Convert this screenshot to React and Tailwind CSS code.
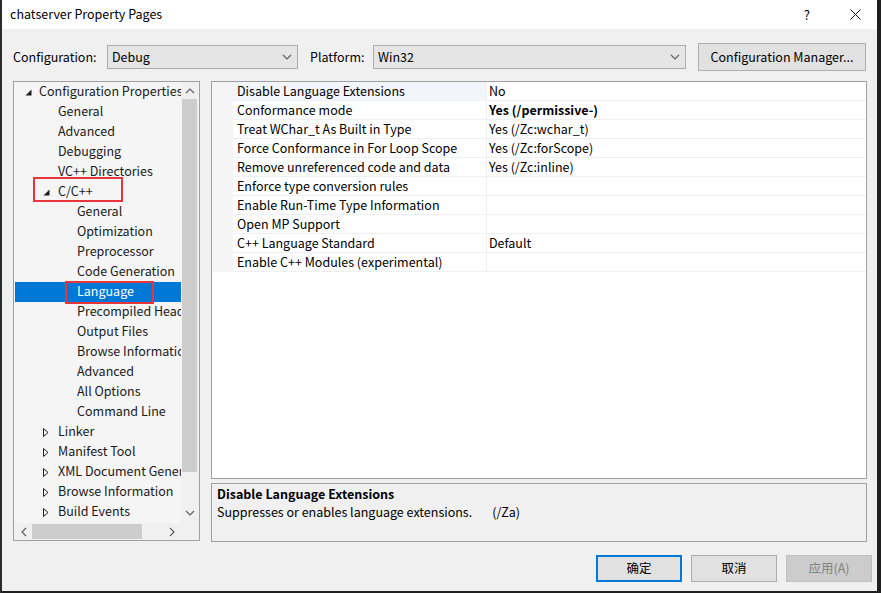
import React from "react";

const font = { fontFamily: '"Noto Sans CJK SC", "Noto Sans", sans-serif' };

const treeRows = [
  { label: "Configuration Properties", level: 0, arrow: "open" },
  { label: "General", level: 1 },
  { label: "Advanced", level: 1 },
  { label: "Debugging", level: 1 },
  { label: "VC++ Directories", level: 1 },
  { label: "C/C++", level: 1, arrow: "open", boxed: true },
  { label: "General", level: 2 },
  { label: "Optimization", level: 2 },
  { label: "Preprocessor", level: 2 },
  { label: "Code Generation", level: 2 },
  { label: "Language", level: 2, selected: true, boxed: true },
  { label: "Precompiled Headers", level: 2 },
  { label: "Output Files", level: 2 },
  { label: "Browse Information", level: 2 },
  { label: "Advanced", level: 2 },
  { label: "All Options", level: 2 },
  { label: "Command Line", level: 2 },
  { label: "Linker", level: 1, arrow: "closed" },
  { label: "Manifest Tool", level: 1, arrow: "closed" },
  { label: "XML Document Generator", level: 1, arrow: "closed" },
  { label: "Browse Information", level: 1, arrow: "closed" },
  { label: "Build Events", level: 1, arrow: "closed" },
];

const props = [
  { name: "Disable Language Extensions", value: "No", current: true },
  { name: "Conformance mode", value: "Yes (/permissive-)", bold: true },
  { name: "Treat WChar_t As Built in Type", value: "Yes (/Zc:wchar_t)" },
  { name: "Force Conformance in For Loop Scope", value: "Yes (/Zc:forScope)" },
  { name: "Remove unreferenced code and data", value: "Yes (/Zc:inline)" },
  { name: "Enforce type conversion rules", value: "" },
  { name: "Enable Run-Time Type Information", value: "" },
  { name: "Open MP Support", value: "" },
  { name: "C++ Language Standard", value: "Default" },
  { name: "Enable C++ Modules (experimental)", value: "" },
];

const Chevron = ({ dir = "down", className = "" }) => {
  const d = {
    down: "M1 3 L5 7 L9 3",
    up: "M1 7 L5 3 L9 7",
    left: "M7 1 L3 5 L7 9",
    right: "M3 1 L7 5 L3 9",
  }[dir];
  return (
    <svg width="10" height="10" viewBox="0 0 10 10" className={className}>
      <path d={d} fill="none" stroke="currentColor" strokeWidth="1.2" />
    </svg>
  );
};

const Arrow = ({ type }) =>
  type === "open" ? (
    <svg width="7" height="7" viewBox="0 0 7 7">
      <polygon points="6.5,0.5 6.5,6.5 0.5,6.5" fill="#1e1e1e" />
    </svg>
  ) : (
    <svg width="6" height="9" viewBox="0 0 6 9">
      <polygon points="0.5,0.5 5,4.5 0.5,8.5" fill="none" stroke="#1e1e1e" strokeWidth="1" />
    </svg>
  );

const Select = ({ value, width }) => (
  <div
    className="h-[24px] bg-[#e5e5e5] border border-[#acacac] flex items-center justify-between pl-[4px] pr-[5px] text-[12.5px] text-black"
    style={{ width }}
  >
    <span>{value}</span>
    <Chevron className="text-[#606060]" />
  </div>
);

const TreeRow = ({ row }) => {
  const indent = [25, 43, 62][row.level];
  const textX = [39, 58, 77][row.level];
  return (
    <div
      className={`relative h-[20px] flex items-center whitespace-nowrap ${
        row.selected ? "bg-[#0078d7] text-white ml-[1px]" : "text-[#1a1a1a]"
      }`}
    >
      {row.arrow && (
        <span className="absolute flex items-center" style={{ left: indent - 14 }}>
          <Arrow type={row.arrow} />
        </span>
      )}
      <span className="-mt-[1px]" style={{ marginLeft: textX - 14 - (row.selected ? 1 : 0) }}>
        {row.label}
      </span>
      {row.boxed && (
        <span
          className="absolute border-2 border-[#e8343a] pointer-events-none"
          style={
            row.selected
              ? { left: 50, top: -1, width: 89, height: 23 }
              : { left: 19, top: -5, width: 90, height: 25 }
          }
        />
      )}
    </div>
  );
};

export default function App() {
  return (
    <div className="w-[881px] h-[593px] bg-[#1f1f1f] flex overflow-hidden" style={font}>
      <div className="w-[2px] bg-[#2b2b2b]" />
      <div className="w-[875px] h-[591px] flex flex-col bg-[#f0f0f0]">
        {/* title bar */}
        <div className="h-[29px] bg-white flex items-center pl-[8px] text-[12.5px] text-black">
          <span>chatserver Property Pages</span>
          <span className="ml-auto mr-[40px] text-[13px]">?</span>
          <svg width="11" height="11" viewBox="0 0 11 11" className="mr-[16px]">
            <path d="M0.5 0.5 L10.5 10.5 M10.5 0.5 L0.5 10.5" stroke="#111" strokeWidth="1" />
          </svg>
        </div>

        {/* configuration row */}
        <div className="flex items-center pl-[11px] mt-[14px] text-[12.5px] text-black">
          <span className="w-[94px]">Configuration:</span>
          <Select value="Debug" width={191} />
          <span className="w-[63px] ml-[12px]">Platform:</span>
          <Select value="Win32" width={313} />
          <button className="ml-[12px] w-[168px] h-[28px] bg-[#e1e1e1] border border-[#adadad] text-[12.5px] text-black">
            Configuration Manager...
          </button>
        </div>

        {/* main */}
        <div className="flex pl-[11px] mt-[10px] text-[12.5px]">
          {/* tree */}
          <div className="w-[187px] h-[460px] border border-[#a0a0a0] flex flex-col bg-[#f0f0f0]">
            <div className="flex flex-1 min-h-0">
              <div className="w-[167px] bg-[#f5f5f5] overflow-hidden">
                {treeRows.map((r, i) => (
                  <TreeRow key={i} row={r} />
                ))}
              </div>
              <div className="w-[17px] flex flex-col items-center">
                <Chevron dir="up" className="text-[#606060] mt-[4px]" />
                <div className="w-[15px] h-[373px] bg-[#cdcdcd] mt-[3px]" />
                <Chevron dir="down" className="text-[#606060] mt-auto mb-[5px]" />
              </div>
            </div>
            <div className="h-[17px] flex items-center">
              <div className="w-[167px] h-full flex items-center">
                <Chevron dir="left" className="text-[#606060] ml-[5px]" />
                <div className="w-[110px] h-[15px] bg-[#cdcdcd] ml-[3px]" />
                <Chevron dir="right" className="text-[#606060] ml-auto mr-[4px]" />
              </div>
            </div>
          </div>

          {/* right column */}
          <div className="ml-[11px] w-[656px] flex flex-col">
            <div className="h-[398px] border border-[#a0a0a0] bg-white">
              {props.map((p, i) => (
                <div key={i} className="flex h-[19px]">
                  <div className="w-[21px] bg-[#f5f5f5]" />
                  <div
                    className={`w-[253px] border-b border-[#edf0f4] flex items-center pl-[4px] text-black whitespace-nowrap ${
                      p.current ? "bg-[#f2f5fa]" : ""
                    }`}
                  >
                    {p.name}
                  </div>
                  <div className="w-px bg-[#edf0f4]" />
                  <div
                    className={`flex-1 border-b border-[#edf0f4] flex items-center pl-[2px] text-black ${
                      p.bold ? "font-bold" : ""
                    }`}
                  >
                    {p.value}
                  </div>
                </div>
              ))}
            </div>
            <div className="mt-[4px] h-[59px] border border-[#a0a0a0] bg-[#f0f0f0] px-[5px] text-black">
              <div className="font-bold h-[19px] leading-[19px]">Disable Language Extensions</div>
              <div className="h-[18px] leading-[18px]">
                Suppresses or enables language extensions.
                <span className="ml-[20px]">(/Za)</span>
              </div>
            </div>
          </div>
        </div>

        {/* buttons */}
        <div className="flex justify-end gap-[9px] pr-[5px] mt-[13px] text-[12.5px]">
          <button className="w-[86px] h-[27px] bg-[#e1e1e1] border-2 border-[#0078d7] text-black">确定</button>
          <button className="w-[86px] h-[27px] bg-[#e1e1e1] border border-[#adadad] text-black">取消</button>
          <button className="w-[86px] h-[27px] bg-[#cccccc] border border-[#bfbfbf] text-[#838383]">应用(A)</button>
        </div>
      </div>
      <div className="flex-1 bg-[#1f1f1f]" />
    </div>
  );
}
